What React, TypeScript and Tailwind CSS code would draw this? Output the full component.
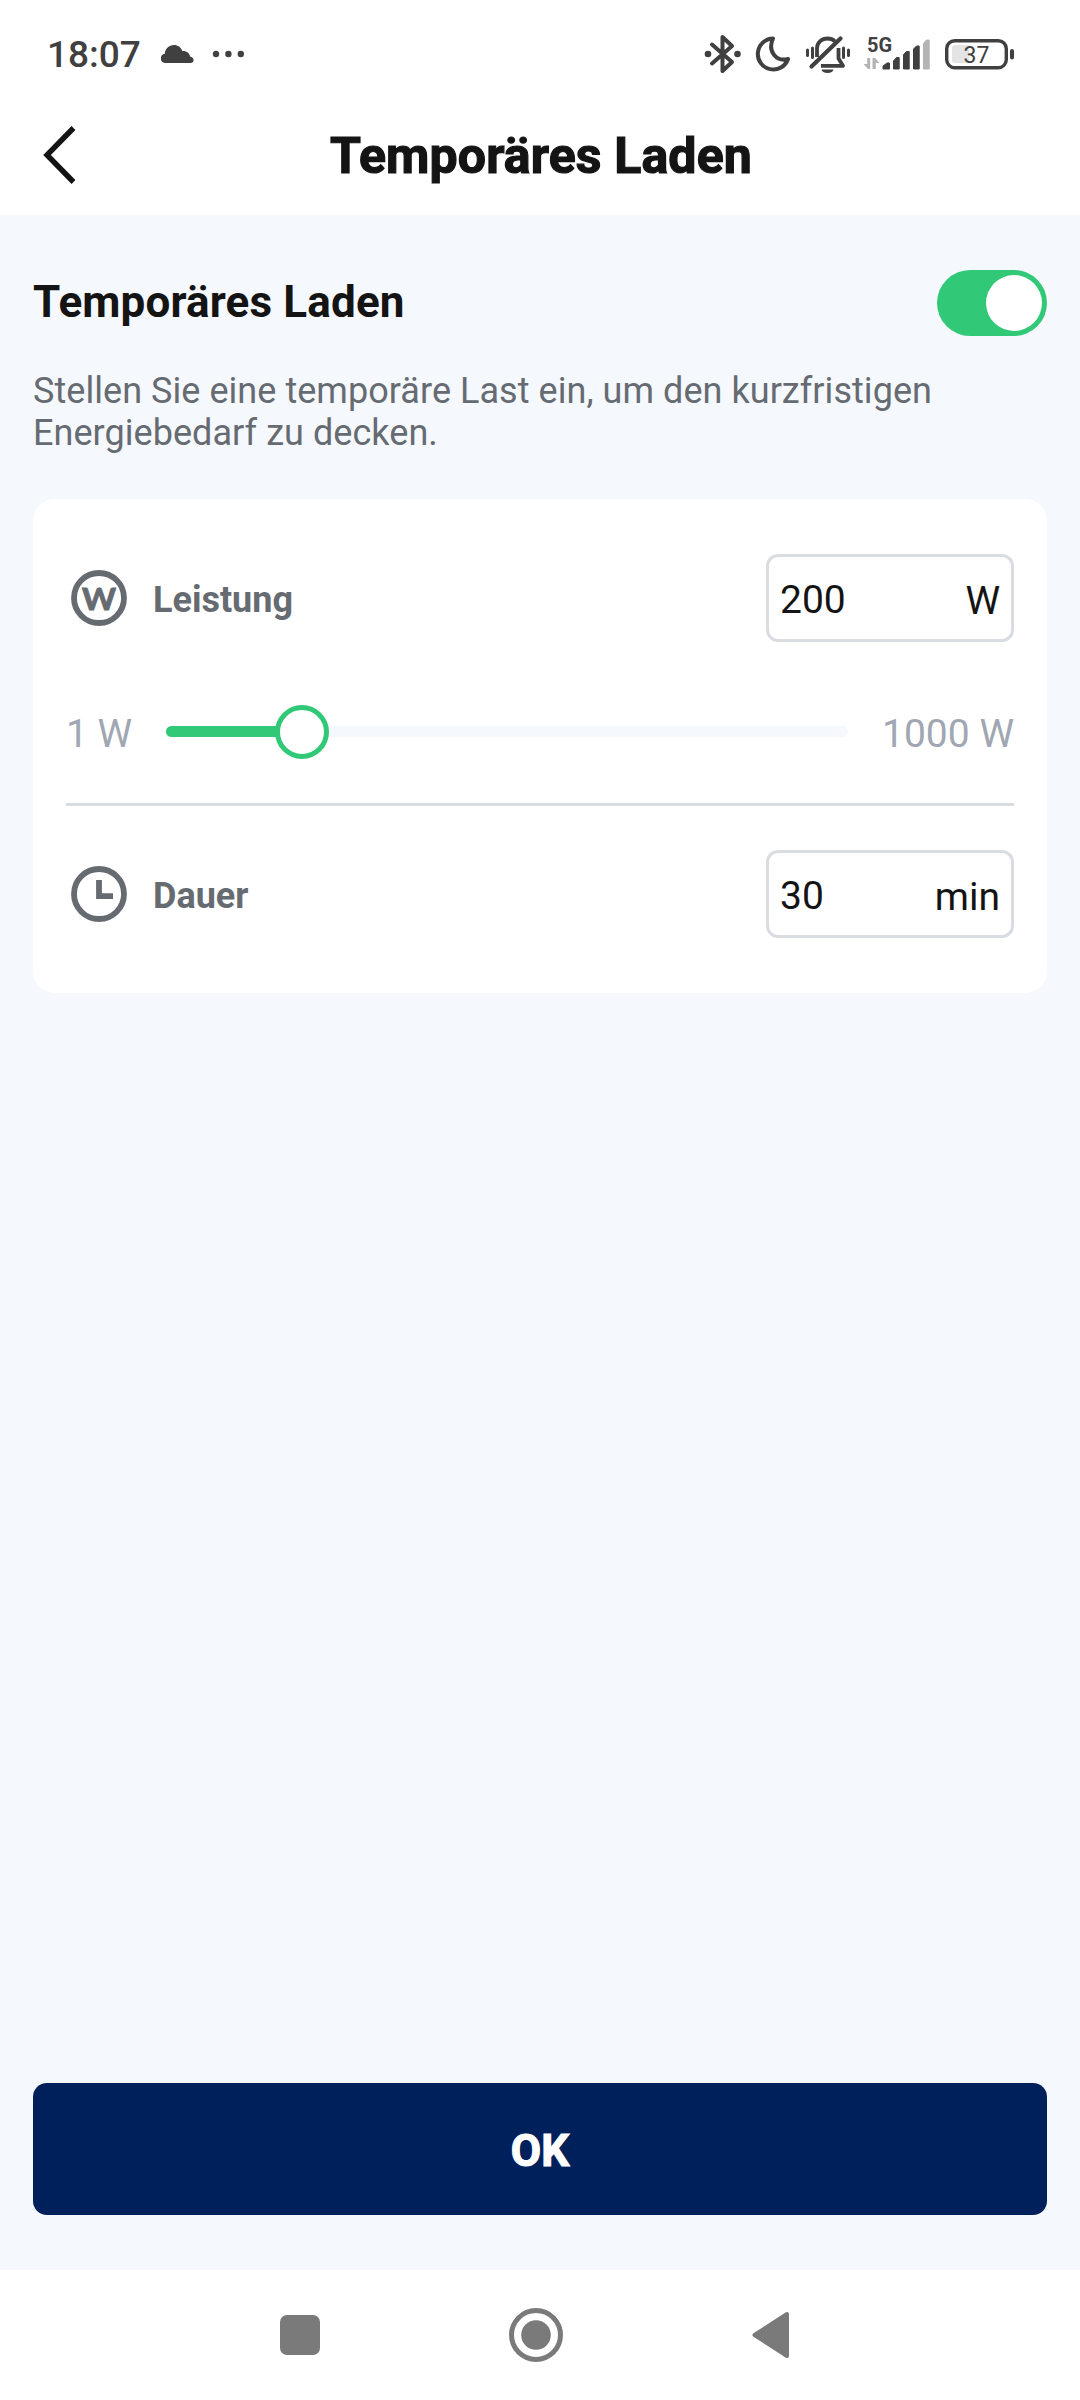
import { useState } from 'react';
import type { ReactNode } from 'react';

const MIN_POWER = 1;
const MAX_POWER = 1000;

export default function App() {
  const [enabled, setEnabled] = useState(true);
  const [power, setPower] = useState('200');
  const [duration, setDuration] = useState('30');

  return (
    <div className="flex flex-col w-[1080px] h-[2400px] bg-[#f5f8fd] font-[Roboto,sans-serif] text-[#141414]">
      <StatusBar />
      <Header title="Temporäres Laden" />

      <main className="flex-1 flex flex-col px-[33px] pt-[55px] pb-[55px]">
        <div className="flex items-center justify-between h-[66px]">
          <h2 className="text-[44px] leading-[52px] font-bold tracking-[0.15px] -mt-[3px]">Temporäres Laden</h2>
          <Toggle checked={enabled} onChange={setEnabled} />
        </div>
        <p className="mt-[34px] text-[36px] leading-[42px] tracking-[0.05px] text-[#666b72]">
          Stellen Sie eine temporäre Last ein, um den kurzfristigen Energiebedarf zu decken.
        </p>

        <section className="mt-[45px] h-[494px] px-[33px] py-[55px] rounded-[22px] bg-white">
          <SettingRow icon={<WattIcon />} label="Leistung" value={power} unit="W" onChange={setPower} />
          <PowerSlider value={Number(power)} />
          <div className="h-[3px] bg-[#d8dde1]" />
          <div className="h-[44px]" />
          <SettingRow icon={<ClockIcon />} label="Dauer" value={duration} unit="min" onChange={setDuration} />
        </section>

        <button className="mt-auto h-[132px] pt-[4px] rounded-[14px] bg-[#00205b] text-white text-[44px] font-bold [-webkit-text-stroke:1.2px]">
          OK
        </button>
      </main>

      <NavigationBar />
    </div>
  );
}

function StatusBar() {
  return (
    <div className="flex items-center h-[108px] pl-[47px] pr-[66px] bg-white text-[#404040]">
      <span className="w-[113px] mt-[2px] text-[37px] leading-[44px] font-medium">18:07</span>
      <svg className="w-[34px] h-[20px]" viewBox="0 0 34 20" fill="currentColor">
        <path d="M5 19a4.700 4.700 0 0 1-.2-9.300C5.200 4.500 9 1 14 1c3.800 0 7 2.300 8.400 6 4.200-.3 7 2 7.600 5.500 2 .4 3.600 1.600 3.600 3.500 0 1.800-1.300 3-3 3z" />
      </svg>
      <svg className="ml-[18px] w-[34px] h-[8px]" viewBox="0 0 34 8" fill="currentColor">
        <circle cx="4" cy="4" r="3.200" />
        <circle cx="16.400" cy="4" r="3.200" />
        <circle cx="28.800" cy="4" r="3.200" />
      </svg>

      <div className="ml-auto flex items-center">
        <BluetoothIcon />
        <MoonIcon />
        <BellOffIcon />
        <SignalIcon />
        <BatteryIcon />
      </div>
    </div>
  );
}

function Header({ title }: { title: string }) {
  return (
    <header className="grid grid-cols-[120px_1fr_120px] items-center h-[107px] bg-white pb-[14px]">
      <button className="pl-[41px]" aria-label="Zurück">
        <svg className="w-[36px] h-[60px]" viewBox="0 0 36 60" fill="none" stroke="#141414" strokeWidth="5.400">
          <path d="M32.500 3 6 30l26.500 27" />
        </svg>
      </button>
      <h1 className="mt-[3px] pl-[2px] text-center text-[50px] leading-[60px] font-bold tracking-[0.15px] [-webkit-text-stroke:1.2px]">
        {title}
      </h1>
    </header>
  );
}

function Toggle({ checked, onChange }: { checked: boolean; onChange: (v: boolean) => void }) {
  return (
    <button
      role="switch"
      aria-checked={checked}
      onClick={() => onChange(!checked)}
      className={`flex items-center w-[110px] h-[66px] px-[5px] rounded-full ${
        checked ? 'justify-end bg-[#31c877]' : 'justify-start bg-[#d8dde1]'
      }`}
    >
      <span className="size-[56px] rounded-full bg-white" />
    </button>
  );
}

function SettingRow({
  icon,
  label,
  value,
  unit,
  onChange,
}: {
  icon: ReactNode;
  label: string;
  value: string;
  unit: string;
  onChange: (v: string) => void;
}) {
  return (
    <div className="flex items-center h-[88px]">
      {icon}
      <span className="ml-[21px] mt-[4px] text-[36px] leading-[42px] font-bold text-[#666b72]">{label}</span>
      <label className="ml-auto flex items-center w-[248px] h-[88px] px-[11px] pt-[3px] rounded-[12px] border-[3px] border-[#d9dde2] text-[39px] leading-[46px]">
        <input
          value={value}
          onChange={(e) => onChange(e.target.value)}
          className="flex-1 min-w-0 bg-transparent outline-none"
        />
        <span className="mt-[2px]">{unit}</span>
      </label>
    </div>
  );
}

function PowerSlider({ value }: { value: number }) {
  const percent = ((value - MIN_POWER) / (MAX_POWER - MIN_POWER)) * 100;

  return (
    <div className="flex items-center h-[161px] pb-[3px] pt-[20px] text-[39px] leading-[46px] text-[#a1a7b2]">
      <span className="w-[100px] mt-[5px]">{MIN_POWER} W</span>
      <div className="relative w-[682px] h-[11px] rounded-full bg-[#f5f8fd]">
        <div className="h-full rounded-full bg-[#31c877]" style={{ width: `${percent}%` }} />
        <div
          className="absolute top-[6px] size-[54px] -translate-x-1/2 -translate-y-1/2 rounded-full border-[5px] border-[#31c877] bg-white"
          style={{ left: `${percent}%` }}
        />
      </div>
      <span className="ml-auto mt-[5px]">{MAX_POWER} W</span>
    </div>
  );
}

function NavigationBar() {
  return (
    <nav className="flex items-center h-[130px] pl-[280px] bg-white text-[#7a7a7a]">
      <div className="size-[40px] rounded-[7px] bg-[#7a7a7a]" />
      <svg className="ml-[189px] size-[54px]" viewBox="0 0 54 54">
        <circle cx="27" cy="27" r="24.500" fill="none" stroke="currentColor" strokeWidth="5" />
        <circle cx="27" cy="27" r="14.800" fill="currentColor" />
      </svg>
      <svg className="ml-[189px] w-[38px] h-[48px]" viewBox="0 0 38 48">
        <path
          d="M35 3v42L2.500 24z"
          fill="currentColor"
          stroke="currentColor"
          strokeWidth="4"
          strokeLinejoin="round"
        />
      </svg>
    </nav>
  );
}

function WattIcon() {
  return (
    <svg className="size-[66px]" viewBox="0 0 66 66">
      <circle cx="33" cy="33" r="25" fill="none" stroke="#666b72" strokeWidth="5.800" />
      <text
        x="16"
        y="44.500"
        textLength="34"
        lengthAdjust="spacingAndGlyphs"
        className="font-[Lato] font-bold text-[31px]"
        fill="#666b72"
        stroke="#666b72"
        strokeWidth="1"
      >
        W
      </text>
    </svg>
  );
}

function ClockIcon() {
  return (
    <svg className="size-[66px]" viewBox="0 0 66 66" fill="none" stroke="#666b72">
      <circle cx="33" cy="33" r="25" strokeWidth="5.800" />
      <path d="M33 19v16.200h14" strokeWidth="5.800" />
    </svg>
  );
}

function BluetoothIcon() {
  return (
    <svg className="w-[38px] h-[40px]" viewBox="0 0 38 40" fill="none" stroke="currentColor">
      <path
        d="m8 10.500 20 17.500-9.500 9V3L28 12 8 29.500"
        strokeWidth="4"
        strokeLinecap="round"
        strokeLinejoin="round"
      />
      <circle cx="4" cy="20" r="3.300" fill="currentColor" stroke="none" />
      <circle cx="33.500" cy="20" r="3.300" fill="currentColor" stroke="none" />
    </svg>
  );
}

function MoonIcon() {
  return (
    <svg className="ml-[13px] w-[36px] h-[38px]" viewBox="0 0 36 38" fill="none" stroke="currentColor">
      <path
        d="M18 3.500A15.500 15.500 0 1 0 33 24C22 27 12 17 18 3.500z"
        strokeWidth="4"
        strokeLinejoin="round"
      />
    </svg>
  );
}

function BellOffIcon() {
  return (
    <svg className="ml-[14px] w-[46px] h-[40px]" viewBox="0 0 46 40" fill="none" stroke="currentColor">
      <g strokeWidth="3.800" strokeLinecap="round" strokeLinejoin="round">
        <path d="M12 23V14.500C12 8 17 4.500 22.500 4.500c3 0 5.500 1 7.500 2.800" strokeLinecap="butt" />
        <path d="M33.500 14v10.500l4.500 7.300H16" strokeLinecap="butt" />
        <path d="M6.500 32.500 35.500 4.500" strokeWidth="4.200" />
      </g>
      <path d="M16.500 35.500h12a6 3.500 0 0 1-12 0z" fill="currentColor" stroke="none" />
      <g strokeWidth="3" strokeLinecap="round">
        <path d="M2.500 16v5.500M7.500 14v9.500M38.500 14v9.500M43.500 16v5.500" />
      </g>
    </svg>
  );
}

function SignalIcon() {
  return (
    <svg className="ml-[12px] w-[70px] h-[36px] overflow-visible" viewBox="0 0 70 36" fill="currentColor">
      <text x="4" y="15.500" className="font-[Roboto] font-bold text-[20px] leading-none">
        5G
      </text>
      <path d="M7.200 22v11H5L.5 28h3.700v-6zM9.500 33V22H12l4.500 5h-3.700v6z" fill="#b4b4b4" />
      <path d="M20 33v-3l4-3h2.500v6zM30.500 33v-8l3-3.500h2.700V33zM40.500 33V18.500l3-3h2.700V33zM50.500 33V13l3-3h2.700v23z" stroke="currentColor" strokeLinejoin="round" />
      <path d="M60.500 33V7.500l3-3.500h2.700v29z" fill="#b4b4b4" stroke="#b4b4b4" strokeLinejoin="round" />
    </svg>
  );
}

function BatteryIcon() {
  return (
    <svg className="ml-[12px] w-[69px] h-[32px]" viewBox="0 0 69 32" fill="none">
      <path d="M10 7h14v18H10a3 3 0 0 1-3-3V10a3 3 0 0 1 3-3z" fill="#e4e4e4" />
      <rect x="1.700" y="2.700" width="59.600" height="27" rx="8" stroke="currentColor" strokeWidth="3.400" />
      <rect x="65" y="11" width="4" height="10.500" rx="2" fill="currentColor" />
      <text x="18.500" y="24.500" fill="currentColor" className="font-[Roboto] text-[23px]">
        37
      </text>
    </svg>
  );
}
